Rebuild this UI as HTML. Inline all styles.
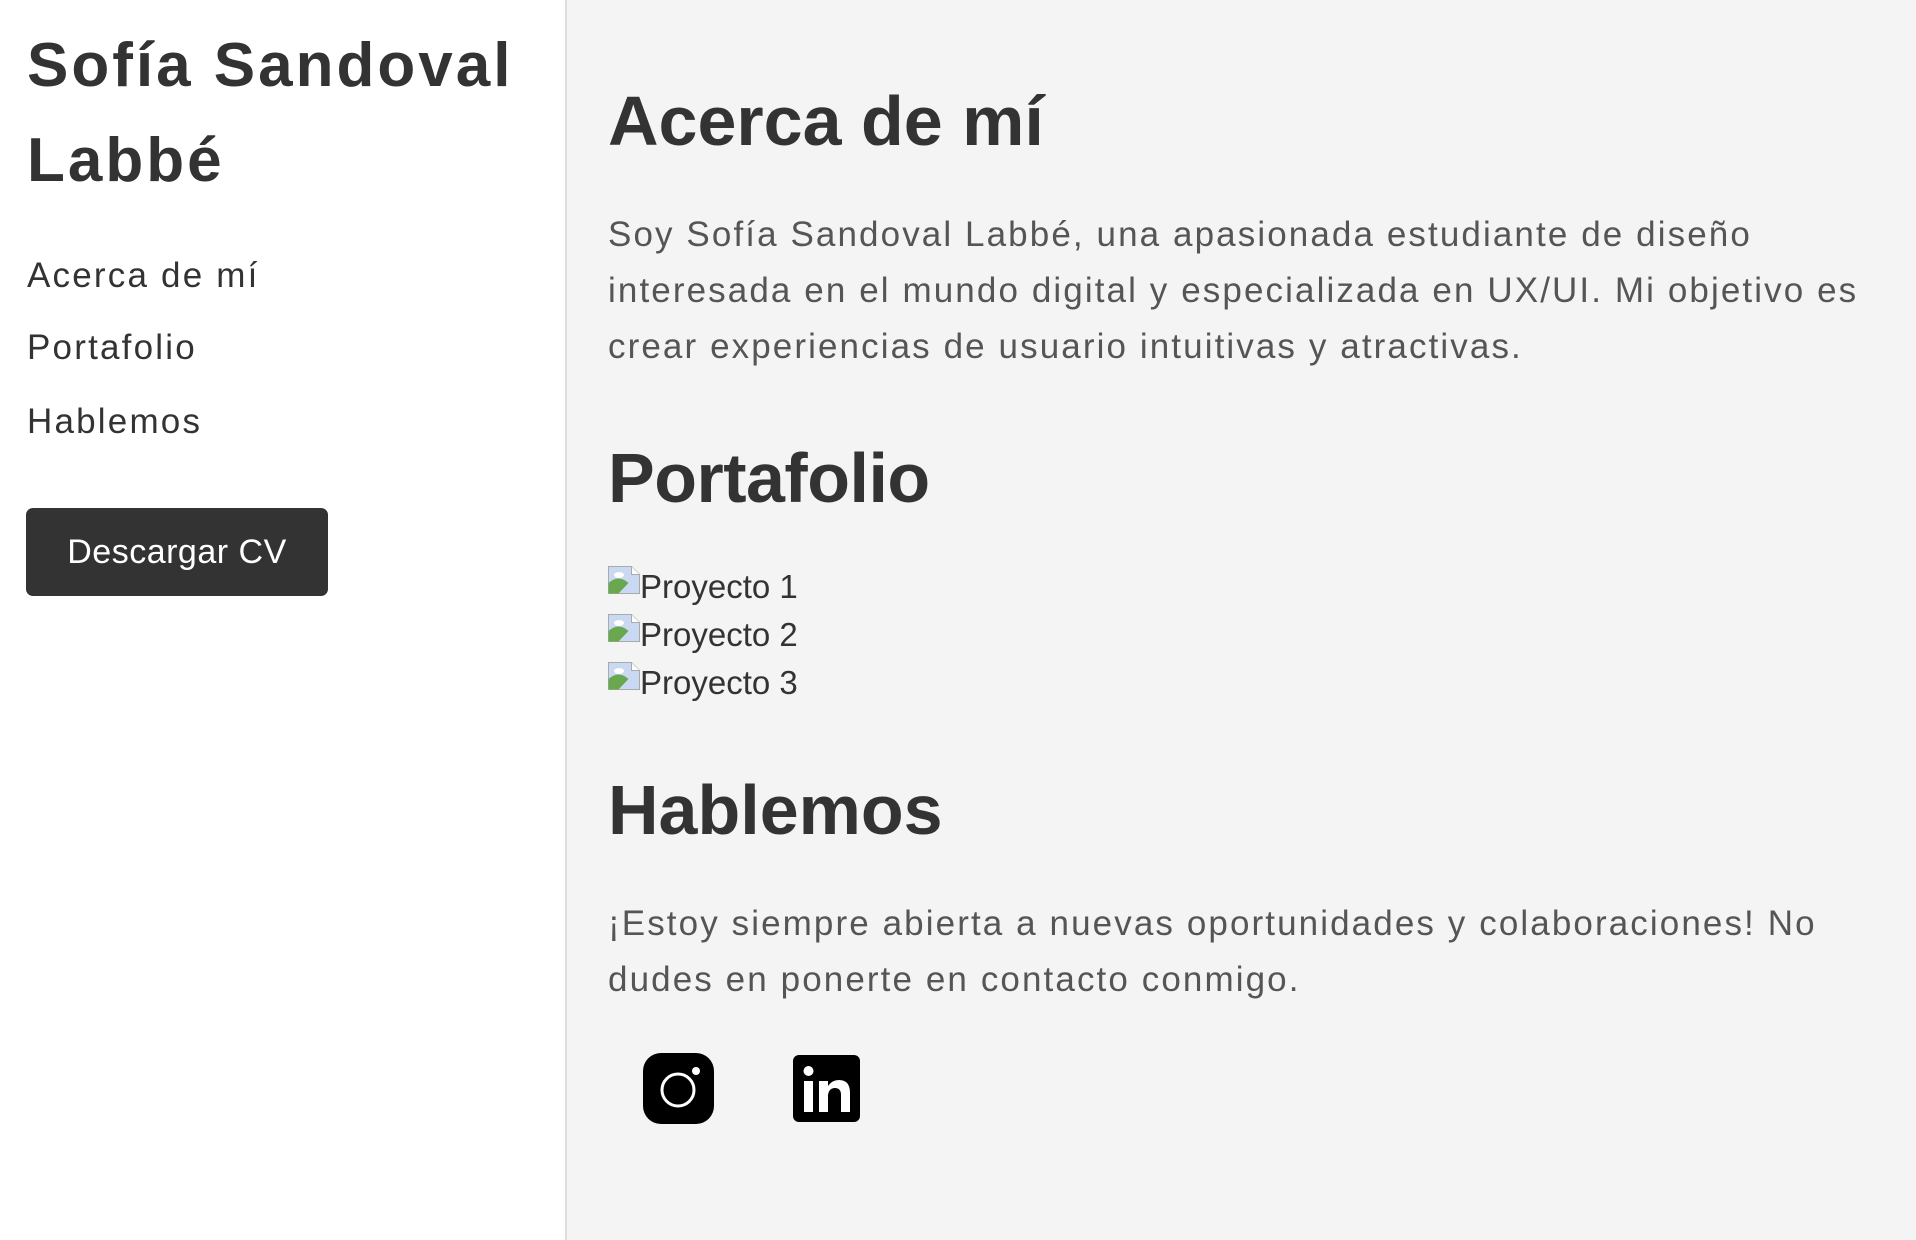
<!DOCTYPE html>
<html><head><meta charset="utf-8"><style>
*{margin:0;padding:0;box-sizing:border-box}
html,body{width:1916px;height:1240px;overflow:hidden}
body{font-family:"Liberation Sans",sans-serif;color:#333;background:#f4f4f4;position:relative}
.side{position:absolute;left:0;top:0;width:567px;height:1240px;background:#fff;border-right:2px solid #ddd}
.a{position:absolute;white-space:nowrap}
h1{font-size:62px;font-weight:bold;line-height:95px;letter-spacing:3px}
.nav{font-size:35px;color:#333;letter-spacing:2.2px}
.btn{position:absolute;left:26px;top:508px;width:302px;height:88px;background:#333;border-radius:7px;color:#fff;font-size:34px;line-height:88px;text-align:center;letter-spacing:0.5px}
h2{font-size:70px;font-weight:bold;line-height:1}
.p{font-size:35px;color:#555;line-height:56px;letter-spacing:2.1px}
.proj{font-size:33px;color:#333;display:flex;align-items:flex-end}
.proj svg{margin-bottom:12px}
</style></head><body>
<div class="side">
<h1 class="a" style="left:27px;top:18px">Sofía Sandoval<br>Labbé</h1>
<div class="a nav" style="left:27px;top:256px">Acerca de mí</div>
<div class="a nav" style="left:27px;top:328px">Portafolio</div>
<div class="a nav" style="left:27px;top:402px">Hablemos</div>
<div class="btn">Descargar CV</div>
</div>
<h2 class="a" style="left:608px;top:86px">Acerca de mí</h2>
<div class="a p" style="left:608px;top:207px">Soy Sofía Sandoval Labbé, una apasionada estudiante de diseño<br>interesada en el mundo digital y especializada en UX/UI. Mi objetivo es<br>crear experiencias de usuario intuitivas y atractivas.</div>
<h2 class="a" style="left:608px;top:443px;letter-spacing:-0.5px">Portafolio</h2>
<div class="a proj" style="left:608px;top:566px"><svg width="32" height="28" viewBox="0 0 32 28"><path d="M0.5 0.5h23l8 8v19H0.5z" fill="#c9d9f4" stroke="#aaa"/><path d="M0.5 27.5V17q10-9 20 0l-10 10.5z" fill="#6aa84f"/><ellipse cx="11" cy="9" rx="5" ry="3" fill="#fff"/><path d="M23.5 0.5v8h8" fill="#fff" stroke="#aaa"/></svg><span>Proyecto 1</span></div>
<div class="a proj" style="left:608px;top:614px"><svg width="32" height="28" viewBox="0 0 32 28"><path d="M0.5 0.5h23l8 8v19H0.5z" fill="#c9d9f4" stroke="#aaa"/><path d="M0.5 27.5V17q10-9 20 0l-10 10.5z" fill="#6aa84f"/><ellipse cx="11" cy="9" rx="5" ry="3" fill="#fff"/><path d="M23.5 0.5v8h8" fill="#fff" stroke="#aaa"/></svg><span>Proyecto 2</span></div>
<div class="a proj" style="left:608px;top:662px"><svg width="32" height="28" viewBox="0 0 32 28"><path d="M0.5 0.5h23l8 8v19H0.5z" fill="#c9d9f4" stroke="#aaa"/><path d="M0.5 27.5V17q10-9 20 0l-10 10.5z" fill="#6aa84f"/><ellipse cx="11" cy="9" rx="5" ry="3" fill="#fff"/><path d="M23.5 0.5v8h8" fill="#fff" stroke="#aaa"/></svg><span>Proyecto 3</span></div>
<h2 class="a" style="left:608px;top:775px">Hablemos</h2>
<div class="a p" style="left:608px;top:896px">¡Estoy siempre abierta a nuevas oportunidades y colaboraciones! No<br>dudes en ponerte en contacto conmigo.</div>
<svg class="a" style="left:643px;top:1053px" width="71" height="71" viewBox="0 0 71 71"><rect width="71" height="71" rx="18" fill="#000"/><circle cx="35" cy="37" r="16" fill="none" stroke="#fff" stroke-width="3"/><circle cx="53" cy="18" r="4" fill="#fff"/></svg>
<svg class="a" style="left:793px;top:1055px" width="67" height="67" viewBox="0 0 67 67"><rect width="67" height="67" rx="6" fill="#000"/><rect x="11" y="26" width="9" height="31" fill="#fff"/><circle cx="15.5" cy="16" r="5" fill="#fff"/><path d="M26 26h9v5q4-6 11-6q11 0 11 13v19h-9V40q0-7-6-7t-7 7v17h-9z" fill="#fff"/></svg>
</body></html>
